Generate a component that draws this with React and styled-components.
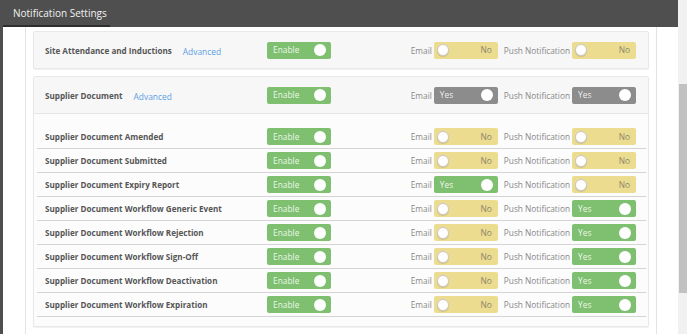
import React from 'react'
import styled, { createGlobalStyle } from 'styled-components'

const GlobalStyle = createGlobalStyle`
  html, body {
    margin: 0;
    padding: 0;
    background: #fff;
    overflow: hidden;
  }
  body {
    font-family: "Open Sans", "Liberation Sans", sans-serif;
  }
`

const Page = styled.div`
  display: flex;
  width: 687px;
  height: 334px;
  overflow: hidden;
`

const Main = styled.div`
  flex: 1;
  display: flex;
  flex-direction: column;
  min-width: 0;
`

const TopBar = styled.div`
  height: 27px;
  flex: none;
  background: #4f4f4f;
  display: flex;
  align-items: stretch;
`

const Tab = styled.div`
  margin-left: 3px;
  width: 107px;
  padding-left: 10px;
  display: flex;
  align-items: center;
  color: #f2f2f2;
  font-size: 10px;
  border-bottom: 2px solid #2e2e2e;
  box-sizing: border-box;
`

const Body = styled.div`
  flex: 1;
  border-left: 3px solid #4f4f4f;
  padding-left: 22px;
  display: flex;
  min-height: 0;
`

const Container = styled.div`
  width: 616px;
  border-left: 1px solid #e3e3e3;
  border-right: 1px solid #e3e3e3;
  padding: 4px 7px 0 7px;
  display: flex;
  flex-direction: column;
  gap: 7px;
`

const Card = styled.div`
  background: #f7f7f7;
  border: 1px solid #e8e8e8;
  border-radius: 2px;
  box-shadow: 0 1px 1px rgba(0, 0, 0, 0.06);
  flex: none;
`

const HeaderRow = styled.div`
  height: 36px;
  display: flex;
  align-items: center;
  padding: 0 12px 0 11px;
  border-bottom: ${(p) => (p.$divided ? '1px solid #e6e6e6' : 'none')};
`

const Inner = styled.div`
  background: #fcfcfc;
  padding: 11px 2px 9px 3px;
`

const Row = styled.div`
  height: 23px;
  display: flex;
  align-items: center;
  padding: 0 10px 0 8px;
  border-bottom: 1px solid #d4d4d4;
`

const Title = styled.div`
  width: 222px;
  flex: none;
  display: flex;
  align-items: center;
  font-size: 8.1px;
  font-weight: 700;
  color: #565656;
  white-space: nowrap;
`

const Advanced = styled.span`
  margin-left: 11px;
  margin-top: 2px;
  font-size: 8.4px;
  font-weight: 400;
  color: #5d9ee6;
`

const Channels = styled.div`
  margin-left: auto;
  display: flex;
  align-items: center;
  gap: 6px;
`

const Channel = styled.div`
  display: flex;
  align-items: center;
  gap: 2px;
`

const ChannelLabel = styled.span`
  font-size: 8.3px;
  color: #878787;
  white-space: nowrap;
`

const palette = {
  green: { bg: '#7fc070', text: 'rgba(255,255,255,0.88)' },
  yellow: { bg: '#ebdc90', text: '#8a876e' },
  gray: { bg: '#8c8c8c', text: 'rgba(255,255,255,0.88)' },
}

const SwitchBox = styled.div`
  width: 64px;
  height: 17px;
  box-sizing: border-box;
  border-radius: 2px;
  background: ${(p) => palette[p.$tone].bg};
  display: flex;
  align-items: center;
  flex-direction: ${(p) => (p.$on ? 'row' : 'row-reverse')};
  justify-content: space-between;
  padding: ${(p) => (p.$on ? '0 5px 0 6px' : '0 6px 0 3px')};
  flex: none;
`

const SwitchText = styled.span`
  font-size: 8.4px;
  color: ${(p) => palette[p.$tone].text};
  line-height: 1;
  margin-top: 1px;
`

const Knob = styled.span`
  width: 12px;
  height: 12px;
  border-radius: 50%;
  background: #fff;
  box-sizing: border-box;
  border: ${(p) => (p.$on ? 'none' : '1px solid #c9c9c9')};
  box-shadow: ${(p) => (p.$on ? 'none' : '0 1px 1px rgba(0,0,0,0.12)')};
`

const Switch = ({ tone, on, text }) => (
  <SwitchBox $tone={tone} $on={on}>
    <SwitchText $tone={tone}>{text}</SwitchText>
    <Knob $on={on} />
  </SwitchBox>
)

const flag = (v) =>
  v ? <Switch tone="green" on text="Yes" /> : <Switch tone="yellow" text="No" />

const ChannelSet = ({ email, push }) => (
  <Channels>
    <Channel>
      <ChannelLabel>Email</ChannelLabel>
      {email}
    </Channel>
    <Channel>
      <ChannelLabel>Push Notification</ChannelLabel>
      {push}
    </Channel>
  </Channels>
)

const ScrollTrack = styled.div`
  width: 9px;
  flex: none;
  background: #f1f1f1;
  padding-top: 84px;
  box-sizing: border-box;
`

const ScrollThumb = styled.div`
  height: 209px;
  background: #c1c1c1;
  margin-left: 1px;
`

const rows = [
  { name: 'Supplier Document Amended', email: false, push: false },
  { name: 'Supplier Document Submitted', email: false, push: false },
  { name: 'Supplier Document Expiry Report', email: true, push: false },
  { name: 'Supplier Document Workflow Generic Event', email: false, push: true },
  { name: 'Supplier Document Workflow Rejection', email: false, push: true },
  { name: 'Supplier Document Workflow Sign-Off', email: false, push: true },
  { name: 'Supplier Document Workflow Deactivation', email: false, push: true },
  { name: 'Supplier Document Workflow Expiration', email: false, push: true },
]

export default function App() {
  return (
    <>
      <GlobalStyle />
      <Page>
        <Main>
          <TopBar>
            <Tab>Notification Settings</Tab>
          </TopBar>
          <Body>
            <Container>
              <Card>
                <HeaderRow>
                  <Title>
                    Site Attendance and Inductions
                    <Advanced>Advanced</Advanced>
                  </Title>
                  <Switch tone="green" on text="Enable" />
                  <ChannelSet email={flag(false)} push={flag(false)} />
                </HeaderRow>
              </Card>
              <Card>
                <HeaderRow $divided>
                  <Title>
                    Supplier Document
                    <Advanced>Advanced</Advanced>
                  </Title>
                  <Switch tone="green" on text="Enable" />
                  <ChannelSet
                    email={<Switch tone="gray" on text="Yes" />}
                    push={<Switch tone="gray" on text="Yes" />}
                  />
                </HeaderRow>
                <Inner>
                  {rows.map((r) => (
                    <Row key={r.name}>
                      <Title>{r.name}</Title>
                      <Switch tone="green" on text="Enable" />
                      <ChannelSet email={flag(r.email)} push={flag(r.push)} />
                    </Row>
                  ))}
                </Inner>
              </Card>
              <Card>
                <HeaderRow />
              </Card>
            </Container>
          </Body>
        </Main>
        <ScrollTrack>
          <ScrollThumb />
        </ScrollTrack>
      </Page>
    </>
  )
}
